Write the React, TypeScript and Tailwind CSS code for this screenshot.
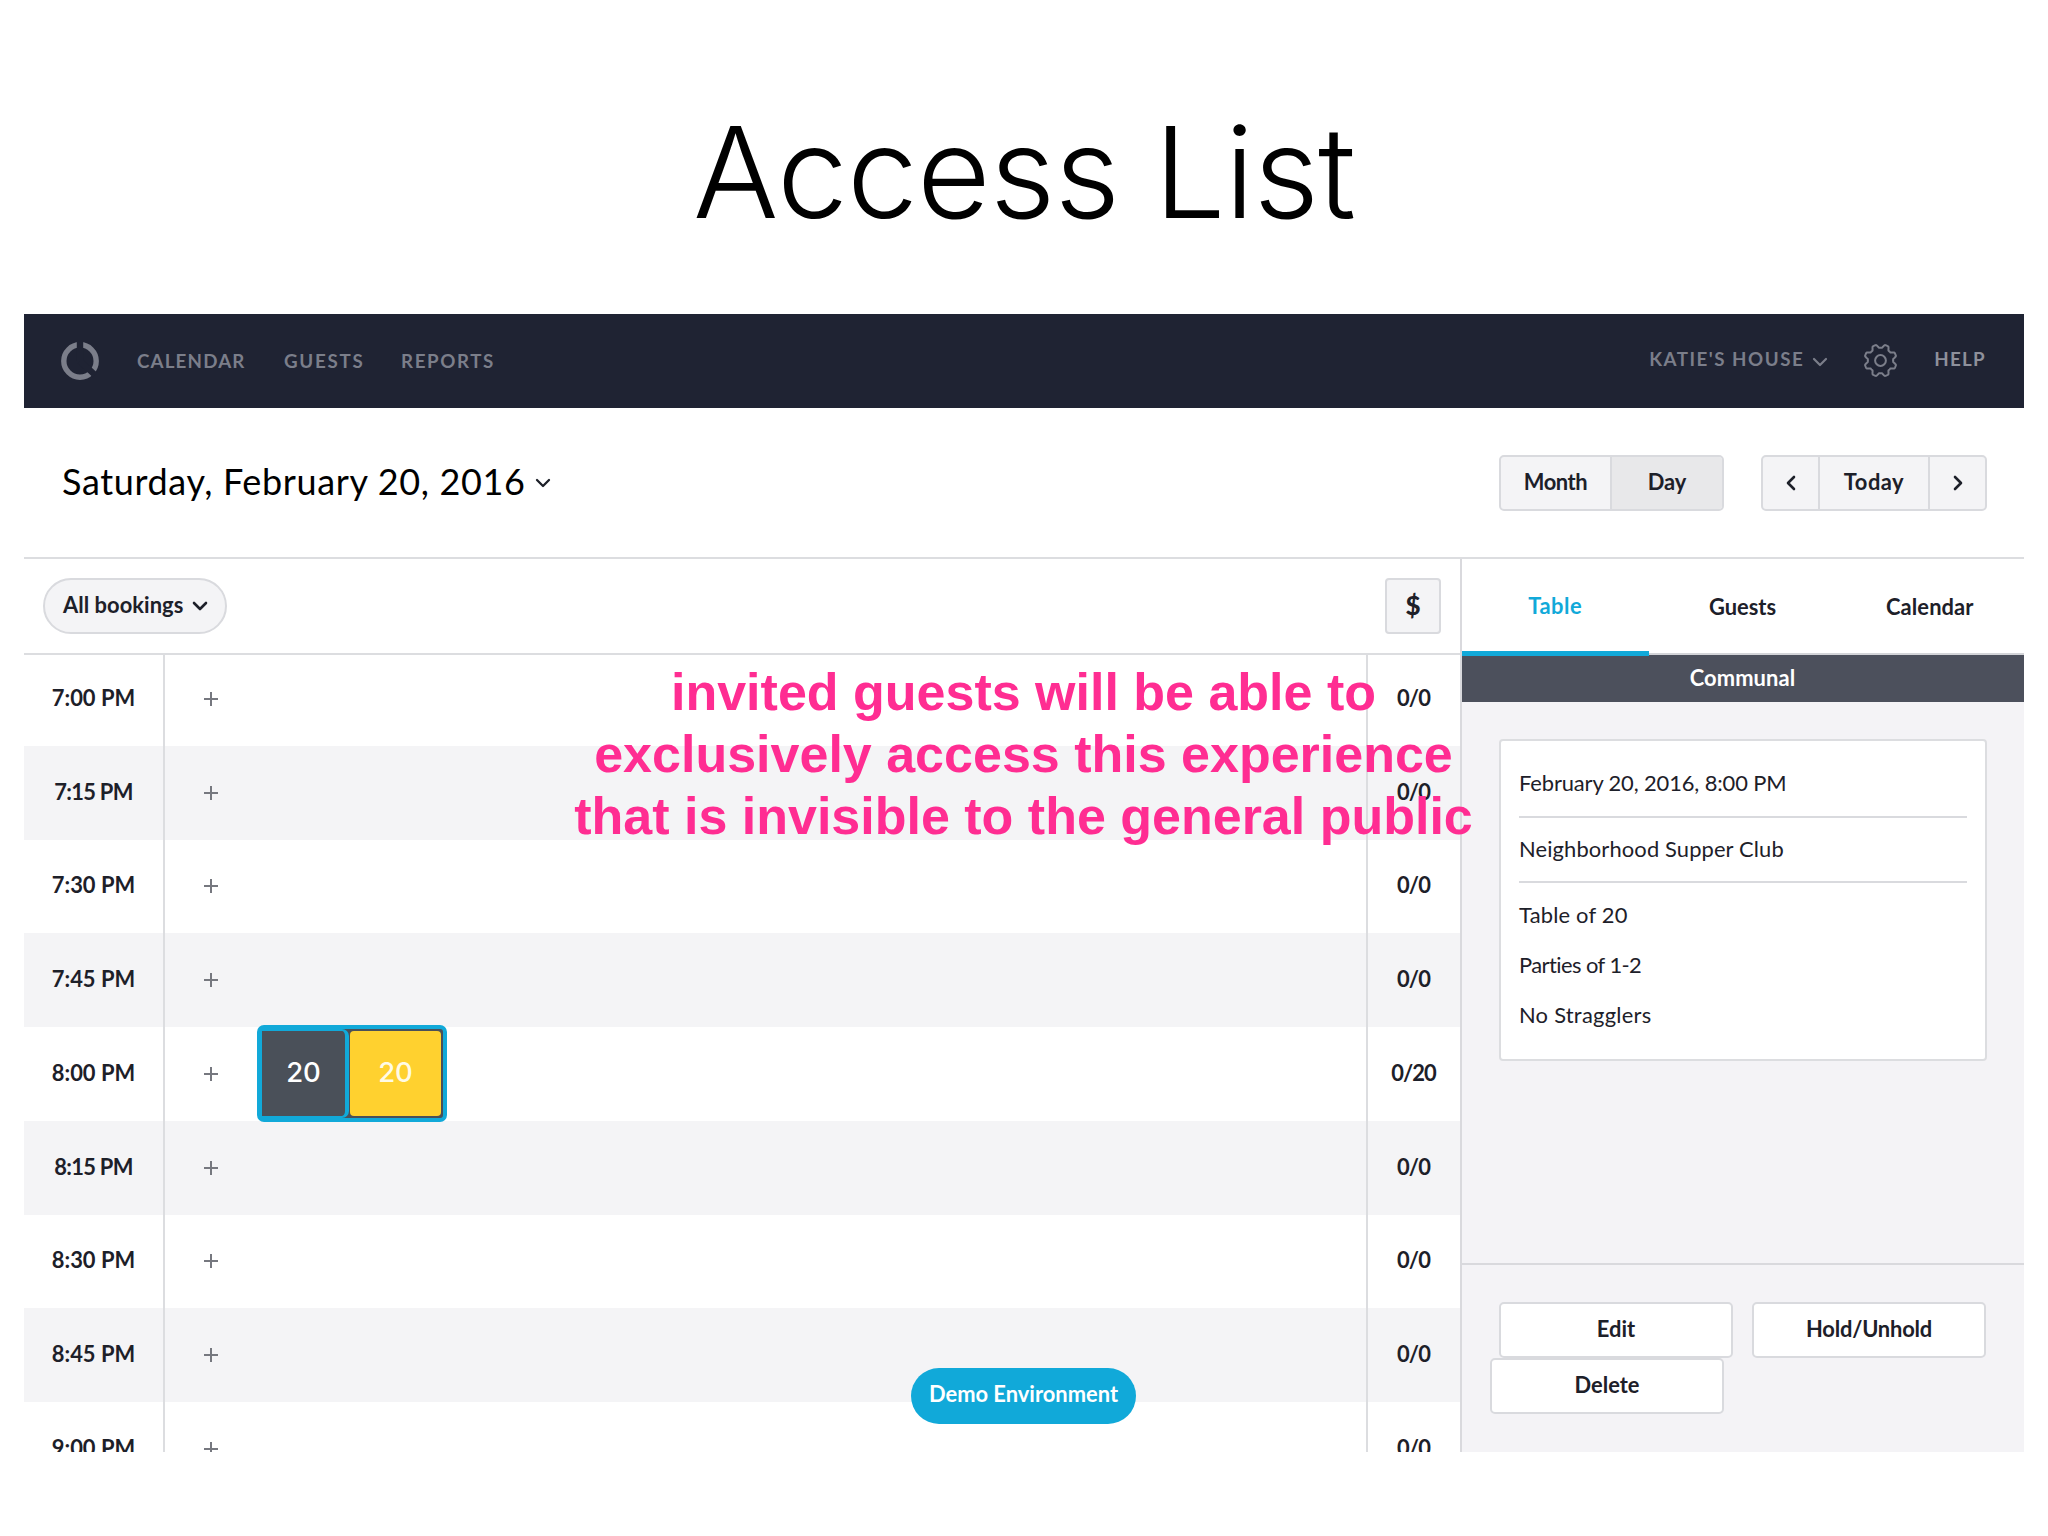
import React from "react";

const NAVY = "#1f2333";

const slots = [
  { time: "7:00 PM", count: "0/0", tight: false },
  { time: "7:15 PM", count: "0/0", tight: true },
  { time: "7:30 PM", count: "0/0", tight: false },
  { time: "7:45 PM", count: "0/0", tight: false },
  { time: "8:00 PM", count: "0/20", tight: false },
  { time: "8:15 PM", count: "0/0", tight: true },
  { time: "8:30 PM", count: "0/0", tight: false },
  { time: "8:45 PM", count: "0/0", tight: false },
  { time: "9:00 PM", count: "0/0", tight: false },
];

function Logo() {
  return (
    <svg width="38" height="38" viewBox="0 0 38 38" fill="none">
      <circle cx="19" cy="19" r="16.2" stroke="#7b7e8a" strokeWidth="5.4" />
      <path d="M19 19V-2M19 19L34 33" stroke={NAVY} strokeWidth="6.4" />
    </svg>
  );
}

function gearOutline() {
  const points: string[] = [];
  for (let i = 0; i < 192; i++) {
    const a = (i / 192) * Math.PI * 2;
    const wave = Math.max(-1, Math.min(1, -1.7 * Math.cos(8 * a)));
    const r = 14.4 + 1.7 * wave;
    points.push(`${(17.5 + r * Math.cos(a)).toFixed(2)} ${(17.5 + r * Math.sin(a)).toFixed(2)}`);
  }
  return `M${points.join("L")}Z`;
}

function Gear() {
  return (
    <svg width="35" height="35" viewBox="0 0 35 35" fill="none" stroke="#7b7e8a" strokeWidth="2" strokeLinejoin="round">
      <path d={gearOutline()} />
      <circle cx="17.5" cy="17.5" r="5.4" />
    </svg>
  );
}

function ChevronDown({ className }: { className: string }) {
  return (
    <svg width="16" height="10" viewBox="0 0 16 10" fill="none" stroke="currentColor" strokeLinecap="round" strokeLinejoin="round" className={className}>
      <path d="M2 2L8 8L14 2" />
    </svg>
  );
}

function ChevronSide({ right }: { right?: boolean }) {
  return (
    <svg width="10" height="16" viewBox="0 0 10 16" fill="none" stroke="currentColor" strokeWidth="2.6" strokeLinecap="round" strokeLinejoin="round">
      <path d={right ? "M2 2L8 8L2 14" : "M8 2L2 8L8 14"} />
    </svg>
  );
}

function Plus() {
  return (
    <svg width="16" height="16" viewBox="0 0 16 16" stroke="#76787f" strokeWidth="2">
      <path d="M8 1V15M1 8H15" />
    </svg>
  );
}

function Booking() {
  return (
    <div className="relative z-10 -my-1 ml-[38px] flex h-[97px] w-[190px] rounded-[7px] border-4 border-[#11a9d9] bg-[#4a5059] font-['Inter',sans-serif] text-[27.5px] font-medium text-white">
      <div className="flex w-[88px] items-center justify-center rounded-r-[7px] border-y-[2.5px] border-r-4 border-l border-[#11a9d9] bg-[#4a5059] pb-[3px]">
        <span>20</span>
      </div>
      <div className="my-[2px] mr-[2px] ml-[1px] flex flex-1 items-center justify-center rounded-[4px] bg-[#ffd12f] pb-[3px] text-[#fffbe6]">
        <span>20</span>
      </div>
    </div>
  );
}

function TopBar() {
  return (
    <header className="flex h-[94px] items-center bg-[#1f2333] pr-[38px] pl-[37px] text-[18.75px] font-bold text-[#7b7e8a]">
      <Logo />
      <nav className="ml-[38px] flex">
        <span className="w-[147px] tracking-[1.15px]">CALENDAR</span>
        <span className="w-[117px] tracking-[1.75px]">GUESTS</span>
        <span className="tracking-[1.6px]">REPORTS</span>
      </nav>
      <div className="ml-auto flex items-center pb-[3px]">
        <span className="tracking-[1.5px] whitespace-nowrap">KATIE'S HOUSE</span>
        <ChevronDown className="mt-1 ml-[8px] [stroke-width:2.2]" />
        <div className="mt-[1px] ml-[35px]"><Gear /></div>
        <span className="ml-[36px] tracking-[1.3px] text-[#8e909b]">HELP</span>
      </div>
    </header>
  );
}

function DateBar() {
  return (
    <div className="flex h-[151px] items-center border-b-2 border-[#dcdde0] pr-[37px] pl-[38px]">
      <h2 className="pb-[4px] text-[36px] tracking-[0.64px] text-black">Saturday, February 20, 2016</h2>
      <ChevronDown className="mt-[1px] ml-[9px] [stroke-width:2.3]" />
      <div className="ml-auto flex h-14 w-[225px] overflow-hidden rounded-[5px] border-2 border-[#d9dade] bg-[#f4f4f6] font-bold">
        <div className="flex w-[111px] items-center justify-center border-r-2 border-[#d9dade] pb-[1px] tracking-[-0.4px]">Month</div>
        <div className="flex flex-1 items-center justify-center bg-[#e8e8ea] pb-[1px]">Day</div>
      </div>
      <div className="ml-[37px] flex h-14 w-[226px] rounded-[5px] border-2 border-[#d9dade] bg-[#f4f4f6] font-bold">
        <div className="flex w-[57px] items-center justify-center border-r-2 border-[#d9dade]"><ChevronSide /></div>
        <div className="flex flex-1 items-center justify-center border-r-2 border-[#d9dade] pb-[1px] tracking-[0.5px]">Today</div>
        <div className="flex w-[55px] items-center justify-center"><ChevronSide right /></div>
      </div>
    </div>
  );
}

function Schedule() {
  return (
    <section className="flex w-[1436px] flex-col">
      <div className="relative z-10 flex h-[96px] shrink-0 items-start justify-between border-b-2 border-[#dcdde0] bg-white pt-[19px] pr-[19px] pl-[19px]">
        <div className="flex h-14 w-[184px] items-center rounded-full border-2 border-[#d9dade] bg-[#f4f4f6] pl-[18px] font-bold">
          <span className="pb-[1px] tracking-[0.05px] whitespace-nowrap">All bookings</span>
          <ChevronDown className="ml-[9px] shrink-0 [stroke-width:2.6]" />
        </div>
        <div className="flex h-14 w-14 items-center justify-center rounded-[4px] border-2 border-[#d9dade] bg-[#f4f4f6] pb-[2px] text-[26px] font-black">$</div>
      </div>
      <div className="-mt-[3px] min-h-0 flex-1 overflow-hidden">
        {slots.map((s, i) => (
          <div key={s.time} className={`flex h-[93.75px] ${i % 2 ? "bg-[#f4f4f6]" : "bg-white"}`}>
            <div className={`flex w-[141px] items-center justify-center border-r-2 border-[#dcdde0] pb-[1px] font-bold ${s.tight ? "tracking-[-0.7px]" : ""}`}>{s.time}</div>
            <div className="flex flex-1 items-center pl-[38px]">
              <Plus />
              {s.count === "0/20" && <Booking />}
            </div>
            <div className="flex w-[94px] items-center justify-center border-l-2 border-[#dcdde0] pr-[1px] pb-[1px] font-bold tracking-[-0.9px]">{s.count}</div>
          </div>
        ))}
      </div>
    </section>
  );
}

function Sidebar() {
  return (
    <aside className="flex flex-1 flex-col border-l-2 border-[#d9d9dd] bg-[#f4f3f6]">
      <div className="grid h-[96px] shrink-0 grid-cols-3 border-b-2 border-[#d3d4d8] bg-white font-bold">
        <div className="relative z-10 -mb-[3px] flex items-center justify-center border-b-[5px] border-[#11a9d9] pt-[2px] pr-[1px] text-[#11a9d9]"><span className="tracking-[0.5px]">Table</span></div>
        <div className="flex items-center justify-center pt-[2px] pr-[1px]">Guests</div>
        <div className="flex items-center justify-center pt-[2px] pr-[1px] tracking-[0.1px]">Calendar</div>
      </div>
      <div className="flex h-[47px] shrink-0 items-center justify-center bg-[#4c505c] pr-[1px] pb-[1px] font-bold tracking-[0.1px] text-white">Communal</div>
      <div className="mx-[37px] mt-[37px] h-[322px] shrink-0 rounded-[4px] border-2 border-[#dcdde0] bg-white px-[18px] pt-[11px]">
        <p className="h-[66px] border-b-2 border-[#d9dade] leading-[62px] tracking-[-0.12px]">February 20, 2016, 8:00 PM</p>
        <p className="h-[65px] border-b-2 border-[#d9dade] leading-[62px] tracking-[0.13px]">Neighborhood Supper Club</p>
        <div className="pt-[7px] leading-[50px]">
          <p className="tracking-[0.2px]">Table of 20</p>
          <p className="tracking-[-0.55px]">Parties of 1-2</p>
          <p className="tracking-[0.25px]">No Stragglers</p>
        </div>
      </div>
      <div className="mt-auto h-[189px] border-t-2 border-[#d9d9dd] pt-[37px] pl-[28px] font-bold">
        <div className="ml-[9px] flex gap-[19px]">
          <div className="flex h-14 w-[234px] items-center justify-center rounded-[5px] border-2 border-[#d9dade] bg-white pb-[2px]">Edit</div>
          <div className="flex h-14 w-[234px] items-center justify-center rounded-[5px] border-2 border-[#d9dade] bg-white pb-[2px] tracking-[-0.2px]">Hold/Unhold</div>
        </div>
        <div className="flex h-14 w-[234px] items-center justify-center rounded-[5px] border-2 border-[#d9dade] bg-white pb-[2px]">Delete</div>
      </div>
    </aside>
  );
}

export default function App() {
  return (
    <div className="relative h-[1536px] w-[2048px] overflow-hidden bg-white px-6 font-['Lato',sans-serif] text-[21.9px] text-[#1d2029]">
      <h1 className="flex h-[314px] items-center justify-center pt-[30px] font-['Inter',sans-serif] text-[127px] font-light tracking-[-0.9px] whitespace-nowrap text-black">
        Access List
      </h1>
      <div className="flex h-[1138px] w-[2000px] flex-col">
        <TopBar />
        <DateBar />
        <main className="flex min-h-0 flex-1">
          <Schedule />
          <Sidebar />
        </main>
      </div>
      <div className="absolute top-[1368px] left-[911px] z-20 flex h-14 w-[225px] items-center justify-center rounded-full bg-[#11a9d9] pb-[3px] font-bold whitespace-nowrap text-white">
        Demo Environment
      </div>
      <p className="absolute top-[661px] left-0 z-20 w-[2047px] text-center font-['Liberation_Sans',sans-serif] text-[52px] leading-[62px] font-bold text-[#ff2d92]">
        invited guests will be able to
        <br />
        exclusively access this experience
        <br />
        that is invisible to the general public
      </p>
    </div>
  );
}
